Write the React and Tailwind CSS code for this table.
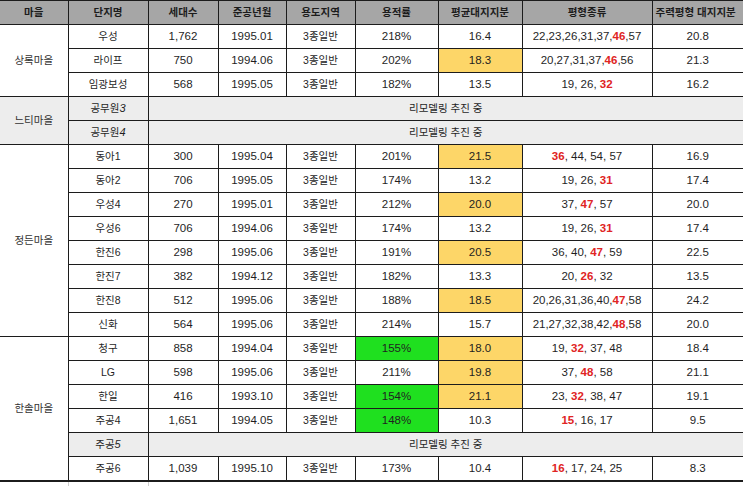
import React from "react";

const FONT = { fontFamily: '"Liberation Sans", Arial, "Noto Sans CJK KR", sans-serif' };

const groups = [
  {
    name: "상록마을",
    rows: [
      { n: "우성", c: "1,762", d: "1995.01", r: "218%", a: "16.4", p: "22,23,26,31,37,*46*,57", m: "20.8" },
      { n: "라이프", c: "750", d: "1994.06", r: "202%", a: "18.3", ay: true, p: "20,27,31,37,*46*,56", m: "21.3" },
      { n: "임광보성", c: "568", d: "1995.05", r: "182%", a: "13.5", p: "19, 26, *32*", m: "16.2" },
    ],
  },
  {
    name: "느티마을",
    gray: true,
    rows: [
      { n: "공무원", ni: "3", remodel: true },
      { n: "공무원", ni: "4", remodel: true },
    ],
  },
  {
    name: "정든마을",
    rows: [
      { n: "동아1", c: "300", d: "1995.04", r: "201%", a: "21.5", ay: true, p: "*36*, 44, 54, 57", m: "16.9" },
      { n: "동아2", c: "706", d: "1995.05", r: "174%", a: "13.2", p: "19, 26, *31*", m: "17.4" },
      { n: "우성4", c: "270", d: "1995.01", r: "212%", a: "20.0", ay: true, p: "37, *47*, 57", m: "20.0" },
      { n: "우성6", c: "706", d: "1994.06", r: "174%", a: "13.2", p: "19, 26, *31*", m: "17.4" },
      { n: "한진6", c: "298", d: "1995.06", r: "191%", a: "20.5", ay: true, p: "36, 40, *47*, 59", m: "22.5" },
      { n: "한진7", c: "382", d: "1994.12", r: "182%", a: "13.3", p: "20, *26*, 32", m: "13.5" },
      { n: "한진8", c: "512", d: "1995.06", r: "188%", a: "18.5", ay: true, p: "20,26,31,36,40,*47*,58", m: "24.2" },
      { n: "신화", c: "564", d: "1995.06", r: "214%", a: "15.7", p: "21,27,32,38,42,*48*,58", m: "20.0" },
    ],
  },
  {
    name: "한솔마을",
    rows: [
      { n: "청구", c: "858", d: "1994.04", r: "155%", rg: true, a: "18.0", ay: true, p: "19, *32*, 37, 48", m: "18.4" },
      { n: "LG", c: "598", d: "1995.06", r: "211%", a: "19.8", ay: true, p: "37, *48*, 58", m: "21.1" },
      { n: "한일", c: "416", d: "1993.10", r: "154%", rg: true, a: "21.1", ay: true, p: "23, *32*, 38, 47", m: "19.1" },
      { n: "주공4", c: "1,651", d: "1994.05", r: "148%", rg: true, a: "10.3", p: "*15*, 16, 17", m: "9.5" },
      { n: "주공", ni: "5", remodel: true },
      { n: "주공6", c: "1,039", d: "1995.10", r: "173%", a: "10.4", p: "*16*, 17, 24, 25", m: "8.3" },
    ],
  },
];

function Pyeong({ s }) {
  const parts = s.split("*");
  return (
    <>
      {parts.map((t, i) =>
        i % 2 === 1 ? (
          <span key={i} className="font-bold text-[#e02424]">
            {t}
          </span>
        ) : (
          <span key={i}>{t}</span>
        )
      )}
    </>
  );
}

const td = "border border-[#1c1c1c] h-[24px] p-0 text-center align-middle whitespace-nowrap";
const ko = "text-[10.5px]";

export default function App() {
  return (
    <div className="w-[743px] h-[486px] overflow-hidden bg-white text-[#1f1f1f]" style={FONT}>
      <table className="table-fixed border-collapse w-[743px] text-[11.5px] leading-none">
        <colgroup>
          <col className="w-[68px]" />
          <col className="w-[80px]" />
          <col className="w-[70px]" />
          <col className="w-[68px]" />
          <col className="w-[69px]" />
          <col className="w-[83px]" />
          <col className="w-[84px]" />
          <col className="w-[130px]" />
          <col className="w-[91px]" />
        </colgroup>
        <thead>
          <tr className="bg-[#a6a6a6] text-[10.5px] font-bold text-[#1c1c1c]">
            <th className={`${td} border-l-0`}>마을</th>
            <th className={td}>단지명</th>
            <th className={td}>세대수</th>
            <th className={td}>준공년월</th>
            <th className={td}>용도지역</th>
            <th className={td}>용적률</th>
            <th className={td}>평균대지지분</th>
            <th className={td}>평형종류</th>
            <th className={`${td} border-r-0 overflow-hidden text-left pl-[3px]`}>주력평형 대지지분</th>
          </tr>
        </thead>
        <tbody>
          {groups.map((g) =>
            g.rows.map((r, i) => (
              <tr key={g.name + i}>
                {i === 0 && (
                  <td
                    rowSpan={g.rows.length}
                    className={`${td} ${ko} border-l-0 text-[#333] ${g.gray ? "bg-[#ededed]" : "bg-white"}`}
                  >
                    {g.name}
                  </td>
                )}
                {r.remodel ? (
                  <>
                    <td className={`${td} ${ko} bg-[#ededed]`}>
                      {r.n}
                      <span className="italic text-[11px]">{r.ni}</span>
                    </td>
                    <td colSpan={7} className={`${td} ${ko} border-r-0 bg-[#ededed]`}>
                      리모델링 추진 중
                    </td>
                  </>
                ) : (
                  <>
                    <td className={`${td} ${ko}`}>{r.n}</td>
                    <td className={td}>{r.c}</td>
                    <td className={td}>{r.d}</td>
                    <td className={`${td} ${ko}`}>3종일반</td>
                    <td className={`${td} ${r.rg ? "bg-[#1fe01f]" : ""}`}>{r.r}</td>
                    <td className={`${td} ${r.ay ? "bg-[#fdd668]" : ""}`}>{r.a}</td>
                    <td className={td}>
                      <Pyeong s={r.p} />
                    </td>
                    <td className={`${td} border-r-0`}>{r.m}</td>
                  </>
                )}
              </tr>
            ))
          )}
          <tr>
            <td className="border-t-2 border-t-[#1c1c1c] border-r border-r-[#cfcfcf] h-[24px]"></td>
            <td className="border-t-2 border-t-[#1c1c1c] border-r border-r-[#cfcfcf]"></td>
            <td className="border-t-2 border-t-[#1c1c1c]"></td>
            <td className="border-t-2 border-t-[#1c1c1c]"></td>
            <td className="border-t-2 border-t-[#1c1c1c]"></td>
            <td className="border-t-2 border-t-[#1c1c1c]"></td>
            <td className="border-t-2 border-t-[#1c1c1c]"></td>
            <td className="border-t-2 border-t-[#1c1c1c]"></td>
            <td className="border-t-2 border-t-[#1c1c1c]"></td>
          </tr>
        </tbody>
      </table>
    </div>
  );
}
